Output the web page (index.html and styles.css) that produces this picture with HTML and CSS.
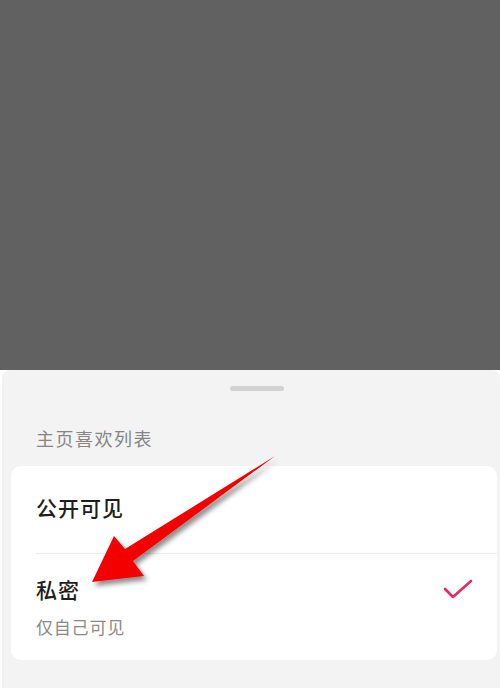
FILE: index.html
```html
<!DOCTYPE html>
<html lang="zh">
<head>
<meta charset="utf-8">
<link rel="stylesheet" href="styles.css">
</head>
<body>
<div class="page">
  <div class="backdrop"></div>
  <div class="sheet">
    <div class="handle"></div>
    <div class="sheet-title">主页喜欢列表</div>
    <div class="card">
      <div class="row row-public">
        <span class="row-label">公开可见</span>
      </div>
      <div class="divider"></div>
      <div class="row row-private">
        <div class="row-line">
          <span class="row-label">私密</span>
          <svg class="check" width="30" height="22" viewBox="0 0 30 22"><path d="M2 11 L10 19 L28 3" fill="none" stroke="#e22b5e" stroke-width="2.6" stroke-linecap="round" stroke-linejoin="round"/></svg>
        </div>
        <span class="row-sub">仅自己可见</span>
      </div>
    </div>
  </div>
  <div class="bottom-strip"></div>
  <svg class="arrow" width="500" height="692" viewBox="0 0 500 692">
    <defs>
      <filter id="sh" x="-20%" y="-20%" width="140%" height="140%">
        <feDropShadow dx="3" dy="4" stdDeviation="2.5" flood-color="#000" flood-opacity="0.45"/>
      </filter>
    </defs>
    <polygon points="92,582 114,536 125,549 275,456 133,561 144,576" fill="#f40000" filter="url(#sh)"/>
  </svg>
</div>
</body>
</html>
```
FILE: styles.css
```css
html, body {
  margin: 0;
  padding: 0;
  background: #ffffff;
}
.page {
  position: relative;
  width: 500px;
  height: 692px;
  overflow: hidden;
  font-family: "Noto Sans CJK SC", "Noto Sans", sans-serif;
  display: flex;
  flex-direction: column;
}
.backdrop {
  height: 370px;
  background: #616161;
  flex: none;
}
.sheet {
  background: #f3f3f3;
  margin-left: 2px;
  border-radius: 8px 8px 0 0;
  height: 318px;
  display: flex;
  flex-direction: column;
  flex: none;
}
.handle {
  width: 54px;
  height: 5px;
  border-radius: 3px;
  background: #d2d2d2;
  margin: 16px 0 0 228px;
}
.sheet-title {
  margin: 35px 0 0 34px;
  font-size: 18px;
  line-height: 24px;
  color: #858585;
  letter-spacing: 1.5px;
}
.card {
  margin: 16px 3px 0 9px;
  background: #ffffff;
  border-radius: 10px;
  display: flex;
  flex-direction: column;
}
.row {
  padding-left: 25px;
  display: flex;
  flex-direction: column;
}
.row-public {
  height: 87px;
  justify-content: center;
  padding-bottom: 5px;
  box-sizing: border-box;
}
.row-label {
  font-size: 21px;
  line-height: 28px;
  color: #1e1e1e;
  letter-spacing: 1px;
  font-weight: 500;
}
.divider {
  height: 1px;
  background: #ececec;
  margin-left: 25px;
}
.row-private {
  padding-top: 21px;
  padding-bottom: 21px;
}
.row-line {
  display: flex;
  align-items: center;
  justify-content: space-between;
  padding-right: 24px;
}
.check {
  display: block;
}
.row-sub {
  margin-top: 12px;
  font-size: 17px;
  line-height: 24px;
  color: #8a8a8a;
  letter-spacing: 0.8px;
}
.bottom-strip {
  flex: 1;
  background: #ffffff;
}
.arrow {
  position: absolute;
  left: 0;
  top: 0;
  pointer-events: none;
}
```
